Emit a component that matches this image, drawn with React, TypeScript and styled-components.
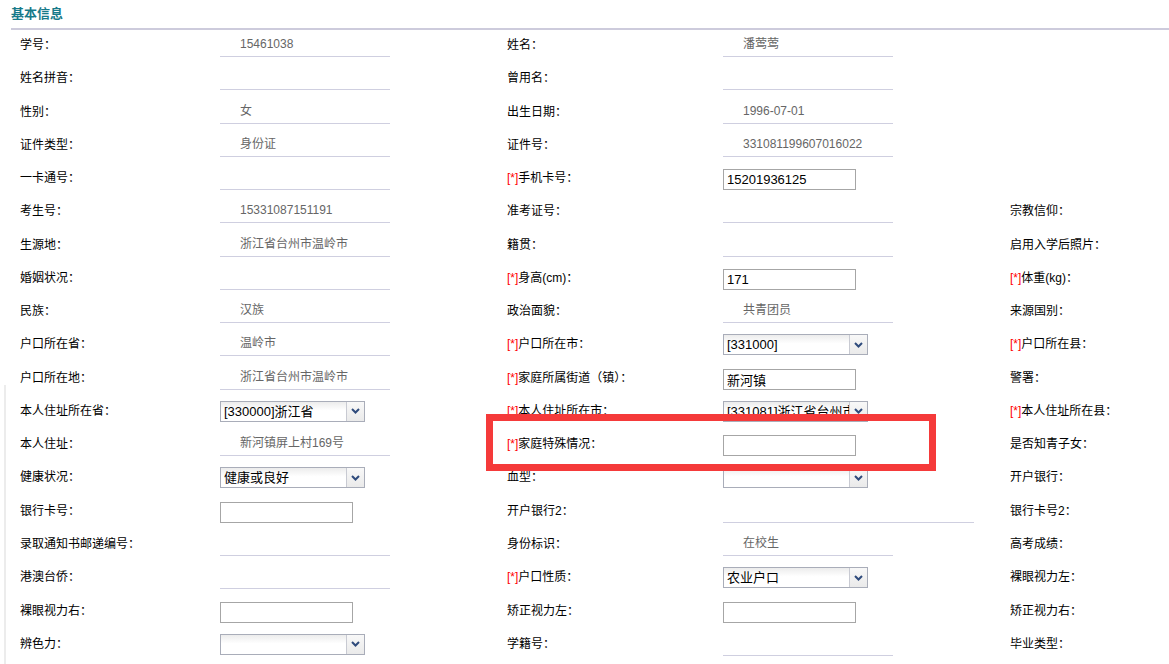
import styled, { createGlobalStyle } from 'styled-components';

type Field =
  | { kind: 'text'; value: string; wide?: boolean }
  | { kind: 'input'; value: string }
  | { kind: 'select'; value: string };

type RowData = {
  l1: string;
  f1: Field;
  l2: string;
  f2: Field;
  l3?: string;
};

const t = (value = '', wide = false): Field => ({ kind: 'text', value, wide });
const inp = (value = ''): Field => ({ kind: 'input', value });
const sel = (value = ''): Field => ({ kind: 'select', value });

// labels starting with "*" are required fields
const rows: RowData[] = [
  { l1: '学号', f1: t('15461038'), l2: '姓名', f2: t('潘莺莺') },
  { l1: '姓名拼音', f1: t(), l2: '曾用名', f2: t() },
  { l1: '性别', f1: t('女'), l2: '出生日期', f2: t('1996-07-01') },
  { l1: '证件类型', f1: t('身份证'), l2: '证件号', f2: t('331081199607016022') },
  { l1: '一卡通号', f1: t(), l2: '*手机卡号', f2: inp('15201936125') },
  { l1: '考生号', f1: t('15331087151191'), l2: '准考证号', f2: t(), l3: '宗教信仰' },
  { l1: '生源地', f1: t('浙江省台州市温岭市'), l2: '籍贯', f2: t(), l3: '启用入学后照片' },
  { l1: '婚姻状况', f1: t(), l2: '*身高(cm)', f2: inp('171'), l3: '*体重(kg)' },
  { l1: '民族', f1: t('汉族'), l2: '政治面貌', f2: t('共青团员'), l3: '来源国别' },
  { l1: '户口所在省', f1: t('温岭市'), l2: '*户口所在市', f2: sel('[331000]'), l3: '*户口所在县' },
  { l1: '户口所在地', f1: t('浙江省台州市温岭市'), l2: '*家庭所属街道（镇）', f2: inp('新河镇'), l3: '警署' },
  { l1: '本人住址所在省', f1: sel('[330000]浙江省'), l2: '*本人住址所在市', f2: sel('[331081]浙江省台州市温岭市'), l3: '*本人住址所在县' },
  { l1: '本人住址', f1: t('新河镇屏上村169号'), l2: '*家庭特殊情况', f2: inp(), l3: '是否知青子女' },
  { l1: '健康状况', f1: sel('健康或良好'), l2: '血型', f2: sel(), l3: '开户银行' },
  { l1: '银行卡号', f1: inp(), l2: '开户银行2', f2: t('', true), l3: '银行卡号2' },
  { l1: '录取通知书邮递编号', f1: t(), l2: '身份标识', f2: t('在校生'), l3: '高考成绩' },
  { l1: '港澳台侨', f1: t(), l2: '*户口性质', f2: sel('农业户口'), l3: '裸眼视力左' },
  { l1: '裸眼视力右', f1: inp(), l2: '矫正视力左', f2: inp(), l3: '矫正视力右' },
  { l1: '辨色力', f1: sel(), l2: '学籍号', f2: t(), l3: '毕业类型' },
];

const GlobalStyle = createGlobalStyle`
  html, body {
    margin: 0;
    padding: 0;
    background: #fff;
  }
  body {
    font-family: "Liberation Sans", "Noto Sans CJK SC", sans-serif;
    font-size: 12px;
    color: #000;
  }
`;

const Page = styled.div`
  position: relative;
  width: 1169px;
  height: 664px;
  overflow: hidden;
  background: #fff;
`;

const SectionTitle = styled.div`
  margin-left: 11px;
  height: 28px;
  line-height: 28px;
  font-size: 13px;
  font-weight: bold;
  color: #177a89;
  border-bottom: 2px solid #cdcbdc;
`;

const FormGrid = styled.div`
  padding-left: 20px;
`;

const Row = styled.div`
  display: grid;
  grid-template-columns: 200px 287px 216px 287px 1fr;
  align-items: start;
  height: 33.28px;
`;

const Label = styled.div`
  box-sizing: border-box;
  height: 29px;
  padding-top: 2px;
  line-height: 27px;
  white-space: nowrap;
  color: #000;
`;

const Req = styled.span`
  color: #f00;
  font-family: "Liberation Sans", sans-serif;
`;

const ValueText = styled.div<{ $wide?: boolean }>`
  box-sizing: border-box;
  width: ${(p) => (p.$wide ? 251 : 170)}px;
  height: 27px;
  padding: 2px 0 0 20px;
  line-height: 24px;
  border-bottom: 1px solid #cfcfe0;
  color: #666;
  white-space: nowrap;
`;

const TextInput = styled.input`
  box-sizing: border-box;
  margin: 6px 0 0;
  width: 133px;
  height: 21px;
  padding: 0 3px;
  border: 1px solid #a6a6a6;
  font-family: "Liberation Sans", "Noto Sans CJK SC", sans-serif;
  font-size: 13px;
  color: #000;
  outline: none;
  background: #fff;
`;

const SelectBox = styled.div`
  box-sizing: border-box;
  display: flex;
  margin-top: 5px;
  width: 145px;
  height: 21px;
  border: 1px solid #a9adb9;
  background: linear-gradient(#ececec, #fff 45%);
`;

const SelectText = styled.div`
  flex: 1;
  min-width: 0;
  padding-left: 3px;
  line-height: 19px;
  font-size: 13px;
  color: #000;
  white-space: nowrap;
  overflow: hidden;
`;

const SelectButton = styled.div`
  flex: 0 0 17px;
  display: flex;
  align-items: center;
  justify-content: center;
  border-left: 1px solid #c8cad2;
  background: linear-gradient(#f8f8f8, #eaeaea);
`;

const LeftEdge = styled.div`
  position: absolute;
  left: 4px;
  top: 385px;
  bottom: 0;
  width: 2px;
  background: #ececec;
`;

const Highlight = styled.div`
  position: absolute;
  left: 486px;
  top: 414px;
  width: 450px;
  height: 57px;
  box-sizing: border-box;
  border: 7px solid #f53a3a;
  pointer-events: none;
  z-index: 2;
`;

const FieldLabel = ({ text }: { text?: string }) => {
  if (!text) return <Label />;
  const required = text.startsWith('*');
  const name = required ? text.slice(1) : text;
  return (
    <Label>
      {required && <Req>[*]</Req>}
      {name}：
    </Label>
  );
};

const FieldValue = ({ field }: { field: Field }) => {
  if (field.kind === 'input') {
    return (
      <div>
        <TextInput defaultValue={field.value} readOnly />
      </div>
    );
  }
  if (field.kind === 'select') {
    return (
      <SelectBox>
        <SelectText>{field.value}</SelectText>
        <SelectButton>
          <svg width="9" height="6" viewBox="0 0 9 6">
            <path d="M1 1 L4.5 4.5 L8 1" fill="none" stroke="#2f4b7c" strokeWidth="2" />
          </svg>
        </SelectButton>
      </SelectBox>
    );
  }
  return <ValueText $wide={field.wide}>{field.value}</ValueText>;
};

export default function App() {
  return (
    <Page>
      <GlobalStyle />
      <SectionTitle>基本信息</SectionTitle>
      <FormGrid>
        {rows.map((r, i) => (
          <Row key={i}>
            <FieldLabel text={r.l1} />
            <FieldValue field={r.f1} />
            <FieldLabel text={r.l2} />
            <FieldValue field={r.f2} />
            <FieldLabel text={r.l3} />
          </Row>
        ))}
      </FormGrid>
      <LeftEdge />
      <Highlight />
    </Page>
  );
}
